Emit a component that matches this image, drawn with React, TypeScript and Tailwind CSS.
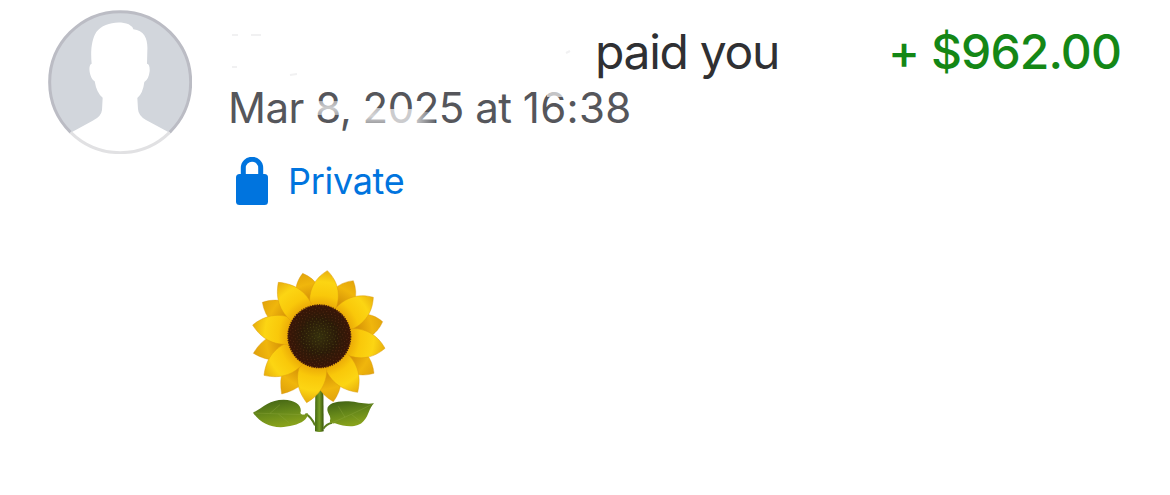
const FRONT_TIPS = [
  [262, 32], [400, 112], [435, 265], [353, 397],
  [200, 428], [72, 346], [38, 195], [115, 67],
];

const BACK_TIPS = [
  [188, 40], [340, 62], [428, 185], [402, 340],
  [280, 425], [125, 402], [40, 280], [67, 127],
];

const CX = 238;
const CY = 229;

// petal outline from the flower head out to its tip
function petal([x, y]: number[], half: number) {
  const len = Math.hypot(x - CX, y - CY);
  const ux = (x - CX) / len;
  const uy = (y - CY) / len;
  const at = (r: number, w: number) =>
    `${(CX + ux * r - uy * w).toFixed(1)} ${(CY + uy * r + ux * w).toFixed(1)}`;

  return `M${at(70, -half * 0.75)}C${at(125, -half * 1.15)} ${at(168, -half * 0.85)} ${at(len, 0)}C${at(168, half * 0.85)} ${at(125, half * 1.15)} ${at(70, half * 0.75)}Z`;
}

// seeds laid out on a spiral
const SEEDS = Array.from({ length: 330 }, (_, i) => {
  const r = 5.2 * Math.sqrt(i);
  const a = i * 2.39996;
  return [CX + r * Math.cos(a), CY + r * Math.sin(a)];
});

function Sunflower() {
  return (
    <svg viewBox="0 0 465 540" className="h-[180px] w-[155px]" role="img" aria-label="Sunflower">
      <defs>
        <radialGradient id="front" gradientUnits="userSpaceOnUse" cx={CX} cy={CY} r="205">
          <stop offset="0.42" stopColor="#e7a206" />
          <stop offset="0.6" stopColor="#f9c80a" />
          <stop offset="0.8" stopColor="#fcd513" />
          <stop offset="1" stopColor="#e5aa0c" />
        </radialGradient>
        <radialGradient id="back" gradientUnits="userSpaceOnUse" cx={CX} cy={CY} r="205">
          <stop offset="0.45" stopColor="#c98104" />
          <stop offset="0.78" stopColor="#f0b60c" />
          <stop offset="1" stopColor="#dfa00b" />
        </radialGradient>
        <radialGradient id="seeds">
          <stop offset="0" stopColor="#35300d" />
          <stop offset="0.55" stopColor="#2b1a08" />
          <stop offset="1" stopColor="#3a1507" />
        </radialGradient>
        <linearGradient id="stem">
          <stop offset="0" stopColor="#42660f" />
          <stop offset="0.5" stopColor="#759b24" />
          <stop offset="1" stopColor="#39550c" />
        </linearGradient>
        <linearGradient id="leaf" x1="0" y1="0" x2="0.3" y2="1">
          <stop offset="0" stopColor="#3e5f14" />
          <stop offset="0.55" stopColor="#66881a" />
          <stop offset="1" stopColor="#87a11c" />
        </linearGradient>
      </defs>

      <path d="M226 380h24l1 134q-13 4-26 0Z" fill="url(#stem)" />
      <path d="M196 462q18 8 29 34M276 488q-17 4-26 18" fill="none" stroke="#5b7c1c" strokeWidth="6" />
      <path d="M39 458C68 443 89 419 131 419C169 420 188 438 181 459C186 467 193 465 203 459C206 475 187 490 160 496C109 510 66 497 39 458Z" fill="url(#leaf)" />
      <path d="M402 430C374 434 354 426 326 424C289 422 262 431 262 448C262 461 272 467 271 478C267 486 272 492 285 490C318 502 354 504 371 483C388 465 386 446 402 430Z" fill="url(#leaf)" />
      <path d="M42 459Q115 462 194 464M90 460l30-26M115 462l32 26M276 488Q330 466 398 432M315 472l-20-33M335 464l26 20" fill="none" stroke="#92aa43" strokeWidth="2" opacity="0.5" />

      {BACK_TIPS.map((tip) => (
        <path key={tip.join()} d={petal(tip, 43)} fill="url(#back)" stroke="#d18b0a" strokeWidth="1" />
      ))}
      {FRONT_TIPS.map((tip) => (
        <path key={tip.join()} d={petal(tip, 46)} fill="url(#front)" stroke="#dc9c0c" strokeWidth="1.5" />
      ))}

      <circle cx={CX} cy={CY} r="94" fill="url(#seeds)" stroke="#42190a" strokeWidth="4" strokeDasharray="4 3" />
      {SEEDS.map(([x, y], i) => (
        <circle key={i} cx={x} cy={y} r="1.7" fill={i < 120 ? "#5b5419" : "#65371b"} opacity="0.65" />
      ))}
    </svg>
  );
}

function Avatar() {
  return (
    <svg viewBox="24 30 432 432" className="size-36 shrink-0" role="img" aria-label="Profile">
      <circle cx="240" cy="246" r="212" fill="#d2d6dc" />
      <clipPath id="round">
        <circle cx="240" cy="246" r="212" />
      </clipPath>
      <path
        clipPath="url(#round)"
        fill="#fff"
        d="M92 398L158 362Q184 350 186 330L188 293Q170 280 164 244Q153 238 149 216Q146 194 155 191C151 154 155 117 169 96C188 70 235 60 266 73Q277 79 280 88C314 91 324 119 322 152L321 191Q330 192 329 214Q326 239 313 246Q309 280 292 294L294 327Q295 347 318 360L389 398V470H92Z"
      />
      <path d="M92 397A211.5 211.5 0 1 1 389 397" fill="none" stroke="#bbbcc4" strokeWidth="9" />
      <path d="M92 397A211.5 211.5 0 0 0 389 397" fill="none" stroke="#e1e1e3" strokeWidth="9" />
    </svg>
  );
}

function Lock() {
  return (
    <svg viewBox="0 0 32 48" className="h-12 w-8" fill="none">
      <path d="M7.3 19V11a8.7 8.7 0 0 1 17.4 0V19" stroke="#0074de" strokeWidth="5" />
      <rect y="17" width="32" height="31" rx="3.5" fill="#0074de" />
    </svg>
  );
}

export default function App() {
  return (
    <main className="flex h-[495px] w-[1170px] bg-white pt-2.5 pl-12 font-['Inter',sans-serif]">
      <Avatar />

      <div className="ml-[38px] flex w-[891px] flex-col">
        <div className="flex h-[76px] justify-between pt-3 text-[48px] leading-[60px]">
          <div className="flex">
            {/* hidden sender */}
            <svg viewBox="0 0 365 60" className="h-[60px] w-[365px]" fill="none" stroke="#f1f1f2" strokeWidth="2">
              <path d="M2 13h6M21 13h10M2 45h5M60 53l7-1M336 31l4-2" />
            </svg>
            <span className="tracking-[-1.3px] text-[#2f3033]">paid you</span>
          </div>
          <span className="font-medium tracking-[-0.9px] text-[#148716]">+ $962.00</span>
        </div>

        <div className="relative -ml-0.5 h-[71px] text-[42px] leading-[44px] text-[#55565b]">
          <span className="tracking-[-0.5px]">Mar 8, 2025 at </span>
          <span className="tracking-[0.3px]">16:38</span>
          {/* fading over the date */}
          <span className="absolute top-[15px] left-[84px] h-[14px] w-[28px] bg-linear-to-b from-white/50 via-white/70 to-white/50" />
          <span className="absolute top-[22px] left-[134px] h-[16px] w-[26px] bg-linear-to-b from-white/60 via-white/75 to-white/40" />
          <span className="absolute top-[23px] left-[160px] h-[16px] w-[25px] bg-white/70" />
          <span className="absolute top-[26px] left-[185px] h-[13px] w-[22px] bg-linear-to-r from-white/75 to-white/10" />
          <span className="absolute top-[4px] left-[319px] h-[7px] w-5 bg-white/65" />
        </div>

        <div className="ml-1.5 flex h-12 items-center gap-5 text-[36px] text-[#0074de]">
          <Lock />
          <span className="tracking-[-0.3px]">Private</span>
        </div>

        <div className="mt-[55px] ml-2.5">
          <Sunflower />
        </div>
      </div>
    </main>
  );
}
